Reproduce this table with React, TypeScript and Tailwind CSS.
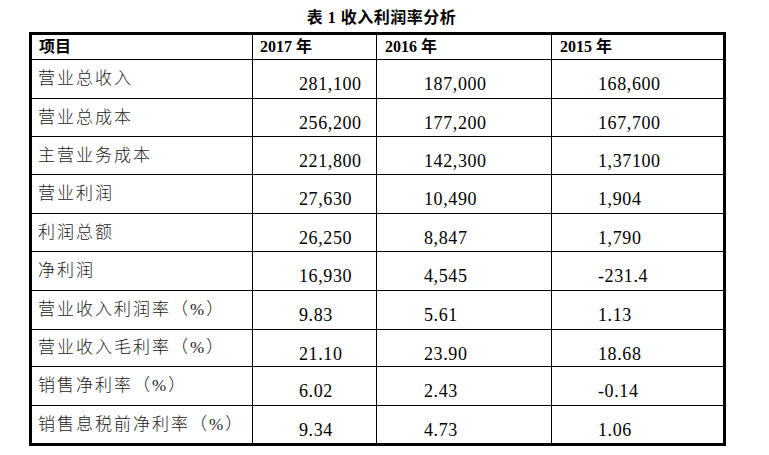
const rows = [
  { label: "营业总收入", v: ["281,100", "187,000", "168,600"], h: "h-[39px]" },
  { label: "营业总成本", v: ["256,200", "177,200", "167,700"], h: "h-[38px]" },
  { label: "主营业务成本", v: ["221,800", "142,300", "1,37100"], h: "h-[38px]" },
  { label: "营业利润", v: ["27,630", "10,490", "1,904"], h: "h-[39px]" },
  { label: "利润总额", v: ["26,250", "8,847", "1,790"], h: "h-[38px]" },
  { label: "净利润", v: ["16,930", "4,545", "-231.4"], h: "h-[39px]" },
  { label: "营业收入利润率（%）", v: ["9.83", "5.61", "1.13"], h: "h-[39px]" },
  { label: "营业收入毛利率（%）", v: ["21.10", "23.90", "18.68"], h: "h-[37px]" },
  { label: "销售净利率（%）", v: ["6.02", "2.43", "-0.14"], h: "h-[39px]" },
  { label: "销售息税前净利率（%）", v: ["9.34", "4.73", "1.06"], h: "h-[37px]" },
];

const font = "font-['Liberation_Serif','Noto_Sans_CJK_SC',serif]";

export default function App() {
  return (
    <div className={`w-[769px] h-[455px] bg-white text-black ${font}`}>
      <div className="pl-[29px] pt-[10px]">
        <div className="w-[697px] pl-[8px] text-center text-[16px] leading-[16px] font-bold tracking-[0.5px]">
          表 1 收入利润率分析
        </div>

        <div className="mt-[6px] w-[697px] border-[3px] border-black">
          {/* header */}
          <div className="grid grid-cols-[221px_124px_175px_171px] h-[25px] border-b border-black text-[16px] font-bold leading-[16px]">
            <div className="flex items-center pl-[7px] border-r border-black">项目</div>
            <div className="flex items-center pl-[7px] border-r border-black">2017 年</div>
            <div className="flex items-center pl-[8px] border-r border-black">2016 年</div>
            <div className="flex items-center pl-[8px]">2015 年</div>
          </div>

          {rows.map((r, i) => (
            <div
              key={r.label}
              className={`grid grid-cols-[221px_124px_175px_171px] ${r.h} ${i < rows.length - 1 ? "border-b border-black" : ""}`}
            >
              <div className="flex items-center pl-[6px] pb-[1px] border-r border-black text-[17px] leading-[17px] tracking-[2px] font-light text-[#1a1a1a]">
                {r.label}
              </div>
              <div className="pl-[46px] pt-[15px] border-r border-black text-[18px] leading-[18px] tracking-[0.6px]">
                {r.v[0]}
              </div>
              <div className="pl-[47px] pt-[15px] border-r border-black text-[18px] leading-[18px] tracking-[0.6px]">
                {r.v[1]}
              </div>
              <div className="pl-[46px] pt-[15px] text-[18px] leading-[18px] tracking-[0.6px]">
                {r.v[2]}
              </div>
            </div>
          ))}
        </div>
      </div>
    </div>
  );
}
